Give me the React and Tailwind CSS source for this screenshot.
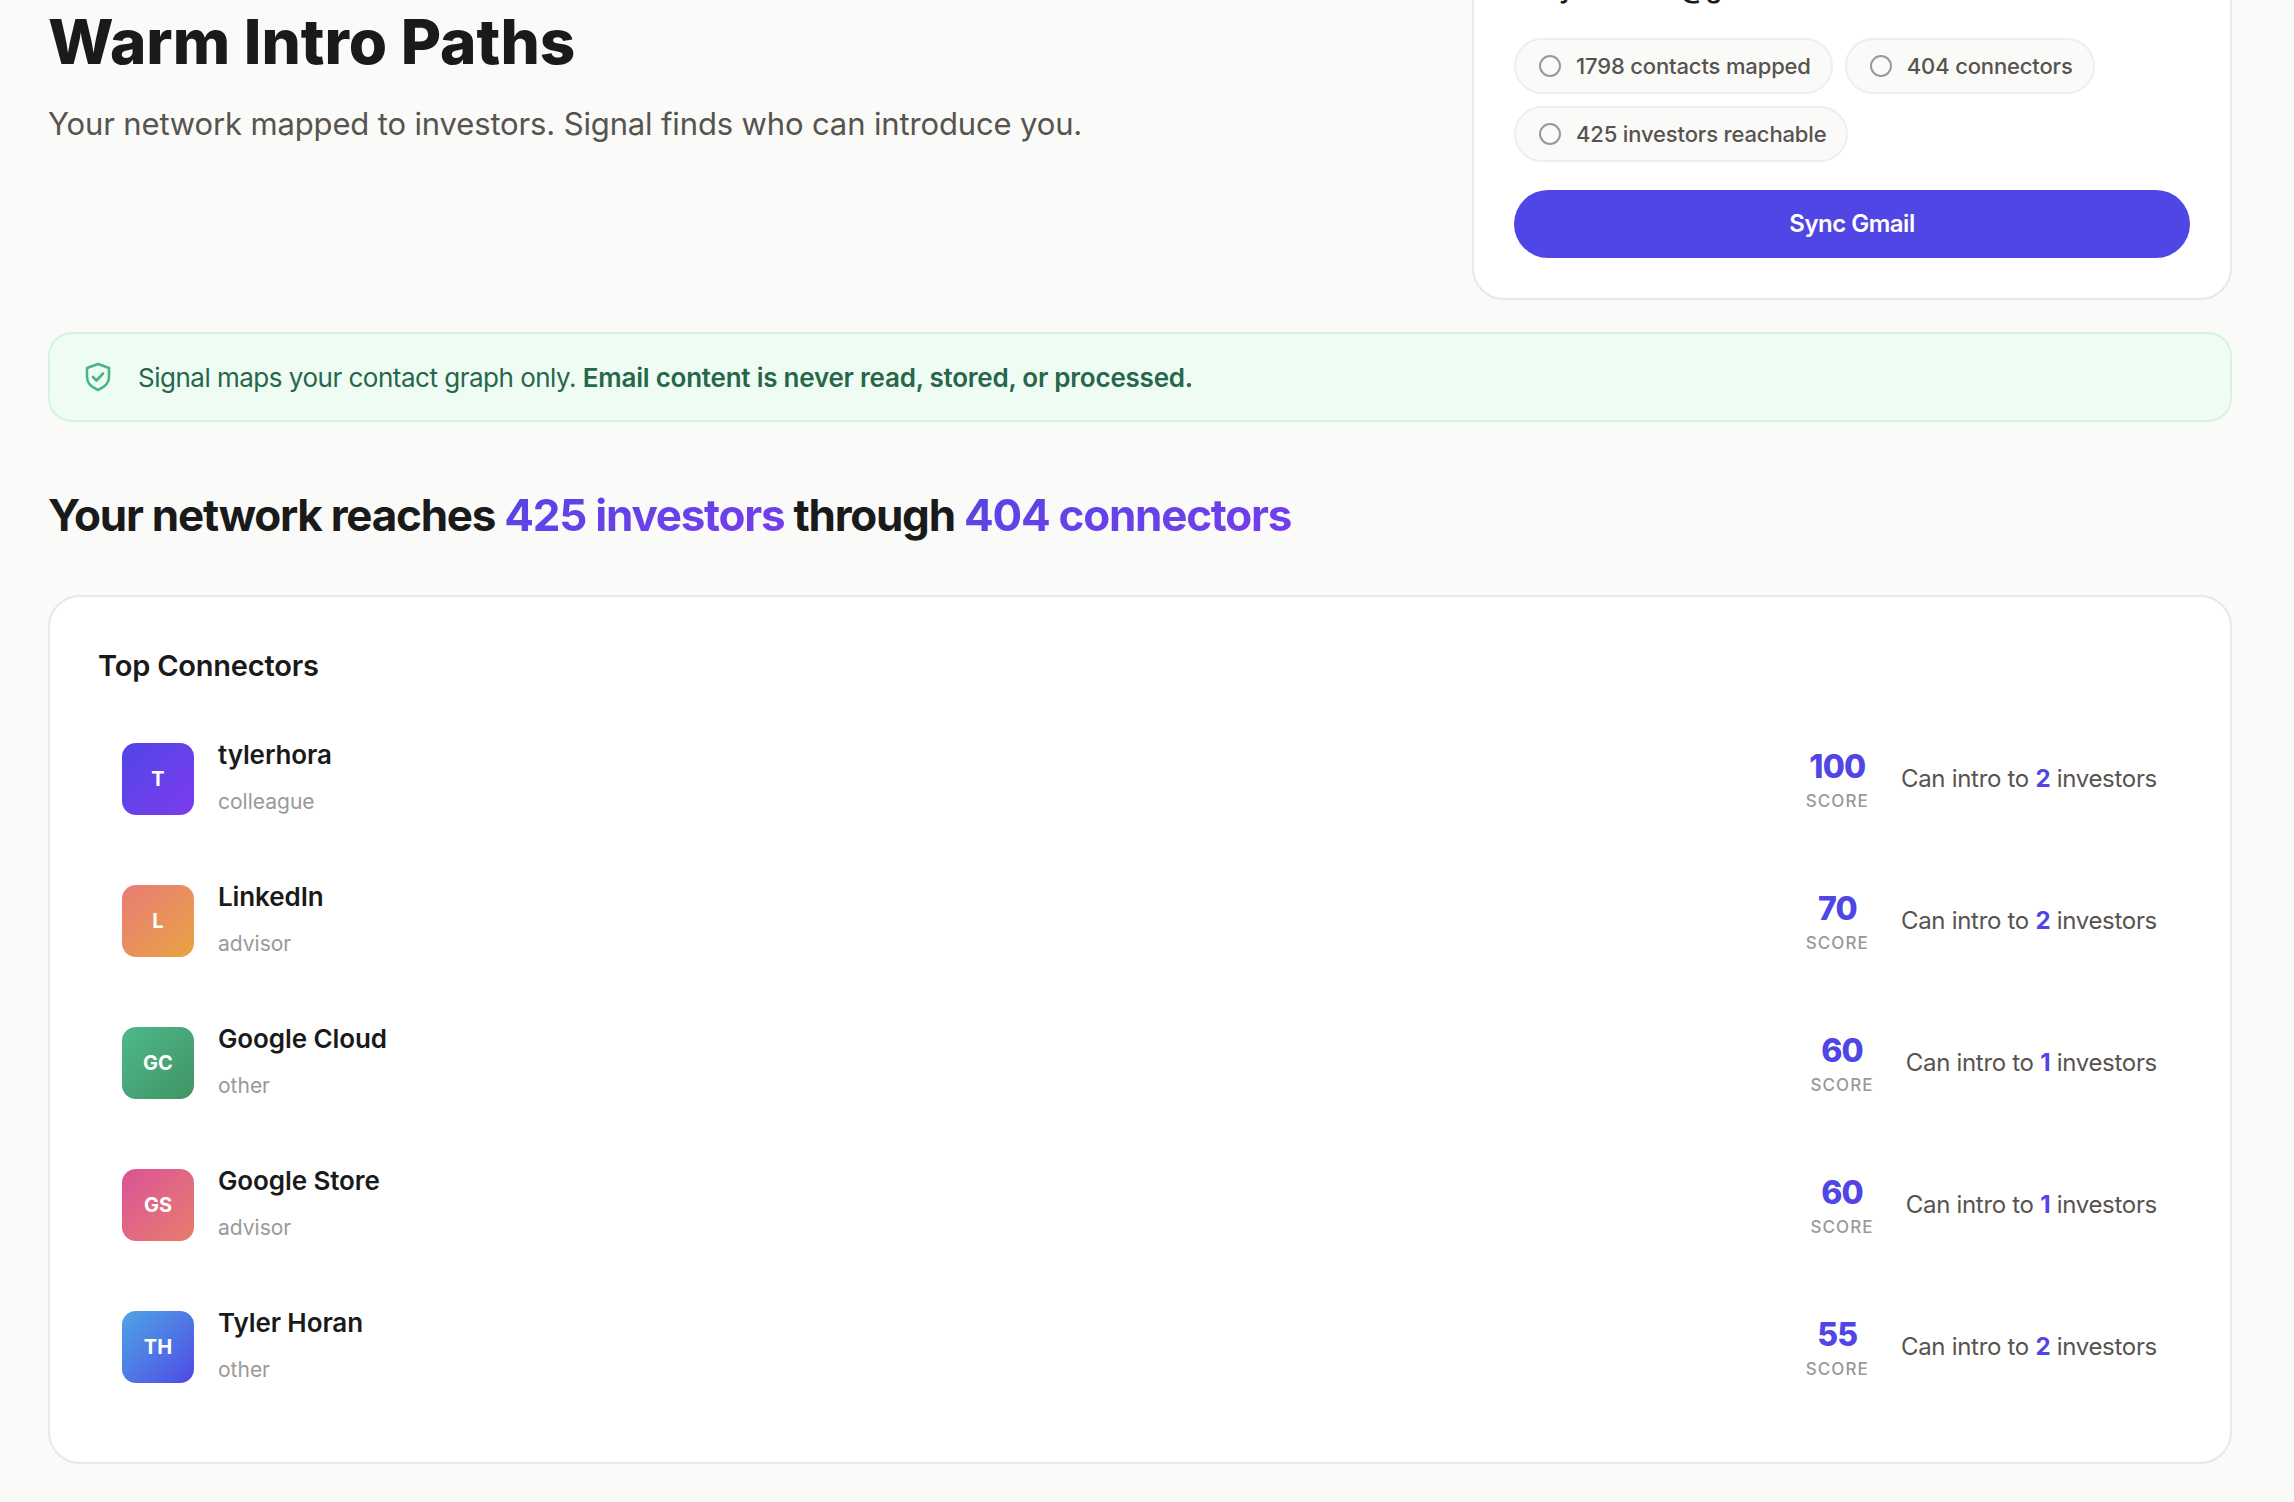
import React from "react";

const people = [
  { i: "T", n: "tylerhora", r: "colleague", s: 100, c: 2, g: "from-[#4f46e5] to-[#7c3aed]" },
  { i: "L", n: "LinkedIn", r: "advisor", s: 70, c: 2, g: "from-[#e87b73] to-[#e8a33d]" },
  { i: "GC", n: "Google Cloud", r: "other", s: 60, c: 1, g: "from-[#4fb88a] to-[#3f9465]" },
  { i: "GS", n: "Google Store", r: "advisor", s: 60, c: 1, g: "from-[#db5296] to-[#e87b6b]" },
  { i: "TH", n: "Tyler Horan", r: "other", s: 55, c: 2, g: "from-[#4fa3e3] to-[#4f46e5]" },
];

function Chip({ children }) {
  return (
    <div className="flex h-[56px] items-center gap-[15px] rounded-full border-2 border-[#eeeeec] bg-[#fafaf8] pl-[23px] pr-[20px] text-[22px] font-medium tracking-[-0.15px] text-[#57534e]">
      <span className="h-[22px] w-[22px] rounded-full border-2 border-[#999999]" />
      {children}
    </div>
  );
}

function Row({ p }) {
  return (
    <div className="flex h-[142px] items-center justify-between pl-[24px] pr-[25px]">
      <div className="flex items-center gap-[24px]">
        <div className={`flex h-[72px] w-[72px] items-center justify-center rounded-[14px] bg-gradient-to-br text-[20px] font-bold text-white ${p.g}`}>
          {p.i}
        </div>
        <div className="flex flex-col gap-[20px] pb-[5px]">
          <div className="text-[26px] font-semibold leading-[30px] tracking-[-0.1px] text-[#1a1a1a]">{p.n}</div>
          <div className="text-[21px] leading-[24px] text-[#999999]">{p.r}</div>
        </div>
      </div>
      <div className="flex items-center gap-[32px]">
        <div className="flex flex-col items-center">
          <div className="text-[32px] font-extrabold leading-[38px] tracking-[-0.8px] text-[#4f46e5]">{p.s}</div>
          <div className="mt-[5px] text-[17px] font-medium leading-[20px] tracking-[1.1px] text-[#999999]">SCORE</div>
        </div>
        <div className="text-[24px] tracking-[-0.3px] text-[#57534e]">
          Can intro to <span className="font-bold text-[#4f46e5]">{p.c}</span> investors
        </div>
      </div>
    </div>
  );
}

export default function App() {
  const grad = "bg-gradient-to-br from-[#4f46e5] to-[#7c3aed] bg-clip-text text-transparent";
  return (
    <div className="h-screen overflow-hidden bg-[#fafaf8] [font-family:Inter,sans-serif]">
      <div className="-mt-[72px] pl-[48px] pr-[62px]">
        <div className="flex items-start justify-between">
          <div className="pt-[80px]">
            <h1 className="text-[62px] font-extrabold leading-[68px] text-[#1a1a1a]">Warm Intro Paths</h1>
            <p className="mt-[28px] text-[31px] leading-[40px] tracking-[-0.14px] text-[#57534e]">
              Your network mapped to investors. Signal finds who can introduce you.
            </p>
          </div>
          <div className="w-[760px] rounded-[32px] border-2 border-[#e8e8e6] bg-white px-[40px] pb-[40px] pt-[42px]">
            <div className="flex h-[32px] items-center justify-between">
              <div className="pl-[35px] text-[26px] font-semibold text-[#1a1a1a]">tylerhoran@gmail.com</div>
              <div className="text-[20px] text-[#999999]">Synced 1 hour ago</div>
            </div>
            <div className="mt-[34px] flex flex-wrap gap-[12px]">
              <Chip>1798 contacts mapped</Chip>
              <Chip>404 connectors</Chip>
              <Chip>425 investors reachable</Chip>
            </div>
            <button className="mt-[28px] flex h-[68px] w-full items-center justify-center rounded-full bg-[#4f46e5] text-[24px] font-semibold tracking-[-0.5px] text-white">
              Sync Gmail
            </button>
          </div>
        </div>

        <div className="mt-[32px] flex h-[90px] items-center gap-[26px] rounded-[24px] border-2 border-[#d4f3e3] bg-[#eefcf4] pl-[34px] text-[26px] tracking-[-0.5px] text-[#276749]">
          <svg width="28" height="30" viewBox="0 0 28 30" fill="none" stroke="#48b583" strokeWidth="2.6" strokeLinecap="round" strokeLinejoin="round">
            <path d="M14 2 L25 6 V15 C25 21 20 25.5 14 28 C8 25.5 3 21 3 15 V6 Z" />
            <path d="M9 15 L12.5 18.5 L19 11.5" />
          </svg>
          <div>
            Signal maps your contact graph only. <span className="font-semibold tracking-[-0.23px]">Email content is never read, stored, or processed.</span>
          </div>
        </div>

        <h2 className="mt-[67px] text-[44px] font-bold leading-[52px] tracking-[-1.25px] text-[#1a1a1a]">
          Your network reaches <span className={grad}>425 investors</span> through <span className={grad}>404 connectors</span>
        </h2>

        <div className="mt-[54px] rounded-[32px] border-2 border-[#e8e8e6] bg-white px-[48px] pb-[44px] pt-[51px]">
          <div className="text-[29px] font-semibold leading-[36px] tracking-[-0.2px] text-[#1a1a1a]">Top Connectors</div>
          <div className="mt-[24px]">
            {people.map((p) => (
              <Row key={p.n} p={p} />
            ))}
          </div>
        </div>
      </div>
    </div>
  );
}
